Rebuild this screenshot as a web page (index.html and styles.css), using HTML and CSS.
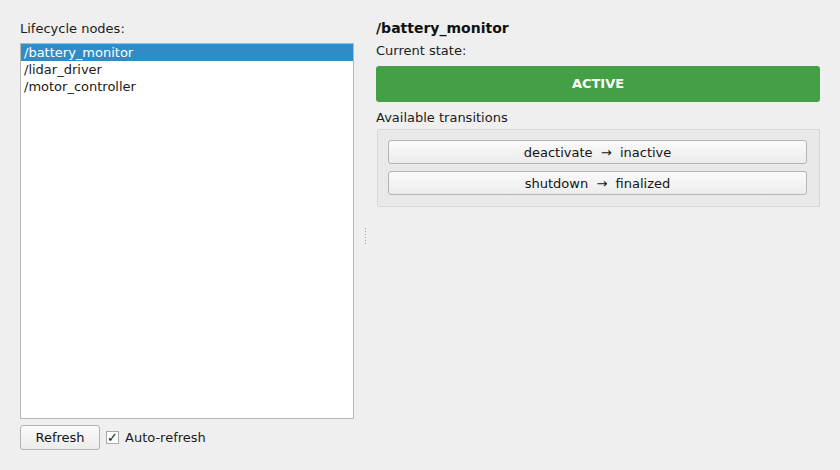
FILE: index.html
```html
<!DOCTYPE html>
<html>
<head>
<meta charset="utf-8">
<link rel="stylesheet" href="styles.css">
</head>
<body>
<div class="window">
  <div class="left">
    <div class="label list-label">Lifecycle nodes:</div>
    <div class="listbox">
      <div class="item selected">/battery_monitor</div>
      <div class="item">/lidar_driver</div>
      <div class="item">/motor_controller</div>
    </div>
    <div class="bottom-row">
      <button class="btn refresh">Refresh</button>
      <label class="check">
        <span class="box">✓</span>
        <span class="check-text">Auto-refresh</span>
      </label>
    </div>
  </div>
  <div class="splitter">
    <div class="dots">
      <span></span><span></span><span></span><span></span><span></span><span></span>
    </div>
  </div>
  <div class="right">
    <div class="title">/battery_monitor</div>
    <div class="label state-label">Current state:</div>
    <div class="state">ACTIVE</div>
    <div class="label trans-label">Available transitions</div>
    <div class="group">
      <button class="btn trans">deactivate&nbsp; →&nbsp; inactive</button>
      <button class="btn trans">shutdown&nbsp; →&nbsp; finalized</button>
    </div>
  </div>
</div>
</body>
</html>
```
FILE: styles.css
```css
html, body {
  margin: 0;
  padding: 0;
  background: #efefef;
}
body {
  font-family: "DejaVu Sans", sans-serif;
  font-size: 13px;
  color: #1c1c1c;
  width: 840px;
  height: 470px;
  overflow: hidden;
}
.window {
  display: flex;
  height: 470px;
  box-sizing: border-box;
  padding: 0 20px 0 20px;
}
.label {
  line-height: 15px;
  height: 15px;
  white-space: nowrap;
}
.left {
  width: 334px;
  display: flex;
  flex-direction: column;
  padding-top: 21px;
}
.list-label {
  margin-bottom: 7px;
}
.listbox {
  width: 334px;
  height: 376px;
  box-sizing: border-box;
  background: #ffffff;
  border: 1px solid #b8b8b8;
}
.item {
  height: 17px;
  line-height: 17px;
  padding-left: 3px;
  color: #1a1a1a;
  white-space: nowrap;
}
.item.selected {
  background: #308cc6;
  color: #ffffff;
}
.bottom-row {
  display: flex;
  align-items: center;
  margin-top: 6px;
  gap: 6px;
}
.btn {
  font-family: "DejaVu Sans", sans-serif;
  font-size: 13px;
  color: #141414;
  background: linear-gradient(#fafafa, #ececec);
  border: 1px solid #b4b4b4;
  border-radius: 3px;
  padding: 0;
  margin: 0;
  box-sizing: border-box;
}
.refresh {
  width: 80px;
  height: 25px;
}
.check {
  display: flex;
  align-items: center;
  gap: 6px;
}
.box {
  width: 13px;
  height: 13px;
  box-sizing: border-box;
  border: 1px solid #a8a8a8;
  background: #ffffff;
  font-size: 13px;
  line-height: 11px;
  text-align: center;
  font-weight: bold;
  color: #111111;
  overflow: hidden;
}
.check-text {
  line-height: 15px;
}
.splitter {
  width: 22px;
  display: flex;
  align-items: flex-start;
  justify-content: center;
}
.dots {
  margin-top: 228px;
  display: flex;
  flex-direction: column;
  gap: 2px;
}
.dots span {
  display: block;
  width: 1px;
  height: 1px;
  background: #a0a0a0;
}
.right {
  flex: 1;
  display: flex;
  flex-direction: column;
  padding-top: 20px;
}
.title {
  font-weight: bold;
  font-size: 14px;
  line-height: 17px;
  height: 17px;
  color: #111111;
}
.state-label {
  margin-top: 6px;
}
.state {
  margin-top: 8px;
  height: 36px;
  line-height: 36px;
  background: #43a047;
  border-radius: 3px;
  color: #ffffff;
  font-weight: bold;
  text-align: center;
}
.trans-label {
  margin-top: 8px;
}
.group {
  margin-top: 4px;
  margin-left: 1px;
  height: 78px;
  box-sizing: border-box;
  border: 1px solid #d6d6d6;
  border-radius: 2px;
  background: #e9e9e9;
  padding: 10px 12px 0 10px;
  display: flex;
  flex-direction: column;
  gap: 7px;
}
.trans {
  height: 24px;
  width: 100%;
}
```
